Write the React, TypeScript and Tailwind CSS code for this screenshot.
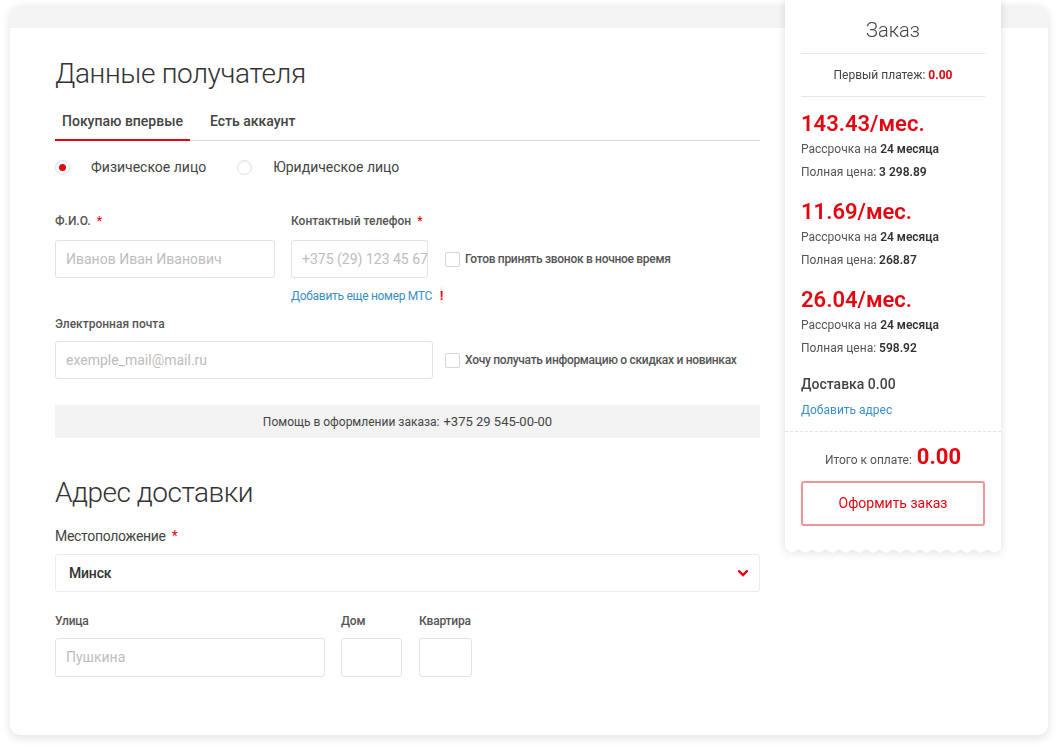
import React from 'react';

const RED = 'text-[#e30611]';

/** Small required-field marker */
const Req = () => <span className={`${RED} ml-[6px]`}>*</span>;

const Checkbox = ({ label }: { label: string }) => (
  <label className="flex items-center gap-[5px] text-[12px] font-medium text-[#555] tracking-[-0.3px]">
    <span className="w-[15px] h-[15px] border border-[#d6d6d6] rounded-[2px] bg-white shrink-0" />
    <span>{label}</span>
  </label>
);

const Radio = ({ checked, label }: { checked?: boolean; label: string }) => (
  <div className="flex items-center">
    <span className="w-[15px] h-[15px] rounded-full border border-[#e2e2e2] bg-white shadow-[inset_0_1px_2px_rgba(0,0,0,0.06)] flex items-center justify-center">
      {checked && <span className="w-[7px] h-[7px] rounded-full bg-[#e30611]" />}
    </span>
    <span className="ml-[21px] text-[14px] text-[#444]">{label}</span>
  </div>
);

const Input = ({ placeholder, className }: { placeholder?: string; className: string }) => (
  <div
    className={`h-[38px] border border-[#e3e3e3] rounded-[3px] bg-white flex items-center px-[10px] text-[14px] text-[#bdbdbd] whitespace-nowrap overflow-hidden ${className}`}
  >
    {placeholder}
  </div>
);

const PriceBlock = ({ monthly, full }: { monthly: string; full: string }) => (
  <div>
    <div className={`text-[22px] leading-[26px] font-semibold ${RED}`}>{monthly}/мес.</div>
    <div className="mt-[4px] text-[12px] leading-[16px] text-[#555]">
      Рассрочка на <span className="font-semibold text-[#333]">24 месяца</span>
    </div>
    <div className="mt-[7px] text-[12px] leading-[16px] text-[#555]">
      Полная цена: <span className="font-semibold text-[#333]">{full}</span>
    </div>
  </div>
);

const OrderPanel = () => (
  <div className="w-[216px] -mt-[28px] relative z-10 shrink-0 drop-shadow-[0_1px_4px_rgba(0,0,0,0.13)]">
    <div className="bg-white pt-[17px]">
      <div className="px-[16px]">
        <div className="text-center text-[20px] leading-[26px] font-light text-[#444]">Заказ</div>
        <div className="mt-[10px] h-px bg-[#e6e6e6]" />
        <div className="mt-[13px] text-center text-[12px] leading-[16px] text-[#444]">
          Первый платеж: <span className={`font-bold ${RED}`}>0.00</span>
        </div>
        <div className="mt-[13px] h-px bg-[#e6e6e6]" />
        <div className="mt-[14px] flex flex-col gap-[19px]">
          <PriceBlock monthly="143.43" full="3 298.89" />
          <PriceBlock monthly="11.69" full="268.87" />
          <PriceBlock monthly="26.04" full="598.92" />
        </div>
        <div className="mt-[19px] text-[14px] leading-[18px] font-medium text-[#444]">Доставка 0.00</div>
        <div className="mt-[9px] text-[12px] leading-[16px] text-[#3a8fc6]">Добавить адрес</div>
      </div>
      <div className="mt-[13px] border-t border-dashed border-[#e4e4e4]" />
      <div className="px-[16px] pb-[22px]">
        <div className="mt-[12px] flex items-baseline justify-center gap-[5px]">
          <span className="text-[12px] text-[#555]">Итого к оплате:</span>
          <span className={`text-[22px] leading-[26px] font-bold ${RED}`}>0.00</span>
        </div>
        <button className="mt-[11px] w-full h-[45px] border-2 border-[#f0949a] rounded-[3px] text-[14px] text-[#e30611] bg-white">
          Оформить заказ
        </button>
      </div>
    </div>
    {/* scalloped bottom edge */}
    <svg width="216" height="6" viewBox="0 0 216 6" className="block">
      <path
        d={
          'M0 0 ' +
          Array.from({ length: 16 })
            .map((_, i) => `L${i * 13.5 + 6.75} 5 L${(i + 1) * 13.5} 1.5`)
            .join(' ') +
          ' L216 0 Z'
        }
        fill="#fff"
      />
    </svg>
  </div>
);

export default function App() {
  return (
    <div
      className="min-h-[749px] bg-white pt-[5px] pl-[10px]"
      style={{ fontFamily: 'Roboto, "Noto Sans", sans-serif' }}
    >
      <div className="w-[1038px] h-[730px] rounded-[10px] bg-white shadow-[0_3px_10px_rgba(0,0,0,0.12)]">
        <div className="h-[23px] rounded-t-[10px] bg-[#f4f4f4]" />
        <div className="flex">
          {/* main form */}
          <div className="w-[705px] ml-[45px] mr-[25px]">
            <h1 className="mt-[29px] text-[28px] leading-[34px] font-light text-[#333] tracking-[-0.35px]">
              Данные получателя
            </h1>

            <div className="mt-[9px] flex border-b border-[#dcdcdc]">
              <div className="w-[135px] px-[7px] pt-[11px] pb-[8px] border-b-2 border-[#e30611] -mb-px text-[14px] leading-[20px] font-medium text-[#444]">
                Покупаю впервые
              </div>
              <div className="pl-[20px] pt-[11px] pb-[8px] text-[14px] leading-[20px] font-medium text-[#444]">
                Есть аккаунт
              </div>
            </div>

            <div className="mt-[16px] h-[20px] flex items-center gap-[31px]">
              <Radio checked label="Физическое лицо" />
              <Radio label="Юридическое лицо" />
            </div>

            <div className="mt-[36px] flex gap-[16px]">
              <div className="w-[220px]">
                <div className="text-[12px] leading-[16px] font-medium text-[#555]">
                  Ф.И.О.<Req />
                </div>
                <Input className="mt-[11px] w-[220px]" placeholder="Иванов Иван Иванович" />
              </div>
              <div className="w-[137px]">
                <div className="text-[12px] leading-[16px] font-medium text-[#555]">
                  Контактный телефон<Req />
                </div>
                <Input className="mt-[11px] w-[137px]" placeholder="+375 (29) 123 45 67" />
                <div className="mt-[9px] flex items-center gap-[8px] whitespace-nowrap">
                  <span className="text-[12px] leading-[16px] text-[#3a8fc6] tracking-[-0.3px]">
                    Добавить еще номер МТС
                  </span>
                  <span className="w-[17px] h-[17px] rounded-full bg-[#f1f1f1] flex items-center justify-center text-[12px] font-bold text-[#e30611]">
                    !
                  </span>
                </div>
              </div>
              <div className="pt-[27px] pl-[1px]">
                <div className="h-[38px] flex items-center">
                  <Checkbox label="Готов принять звонок в ночное время" />
                </div>
              </div>
            </div>

            <div className="mt-[12px] text-[12px] leading-[16px] font-medium text-[#555]">Электронная почта</div>
            <div className="mt-[9px] flex items-center gap-[12px]">
              <Input className="w-[378px]" placeholder="exemple_mail@mail.ru" />
              <Checkbox label="Хочу получать информацию о скидках и новинках" />
            </div>

            <div className="mt-[26px] h-[33px] bg-[#f3f3f3] flex items-center justify-center gap-[4px] text-[#444]">
              <span className="text-[12px]">Помощь в оформлении заказа:</span>
              <span className="text-[13px]">+375 29 545-00-00</span>
            </div>

            <h2 className="mt-[38px] text-[28px] leading-[34px] font-light text-[#333] tracking-[-0.5px]">Адрес доставки</h2>

            <div className="mt-[17px] text-[14px] leading-[18px] text-[#444] tracking-[-0.3px]">
              Местоположение<Req />
            </div>
            <div className="mt-[9px] h-[38px] border border-[#ececec] rounded-[3px] flex items-center justify-between pl-[13px] pr-[11px]">
              <span className="text-[14px] font-medium text-[#333] tracking-[-0.2px]">Минск</span>
              <svg width="10" height="7" viewBox="0 0 10 7">
                <path d="M1 1.2 L5 5 L9 1.2" fill="none" stroke="#e30611" strokeWidth="2.4" strokeLinecap="round" />
              </svg>
            </div>

            <div className="mt-[21px] flex gap-[16px]">
              <div className="w-[270px]">
                <div className="text-[12px] leading-[16px] font-medium text-[#555] tracking-[-0.2px]">Улица</div>
                <Input className="mt-[9px] !h-[39px] w-[270px]" placeholder="Пушкина" />
              </div>
              <div className="w-[61px]">
                <div className="text-[12px] leading-[16px] font-medium text-[#555] tracking-[-0.2px]">Дом</div>
                <Input className="mt-[9px] !h-[39px] w-[61px]" />
              </div>
              <div className="w-[53px] ml-[1px]">
                <div className="text-[12px] leading-[16px] font-medium text-[#555] tracking-[-0.2px]">Квартира</div>
                <Input className="mt-[9px] !h-[39px] w-[53px]" />
              </div>
            </div>
          </div>

          <OrderPanel />
        </div>
      </div>
    </div>
  );
}
